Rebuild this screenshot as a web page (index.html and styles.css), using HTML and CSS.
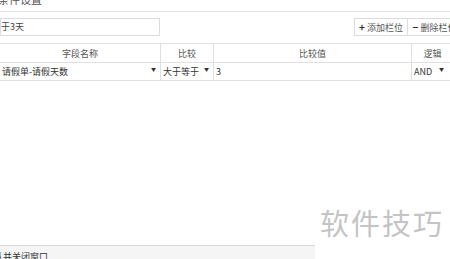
FILE: index.html
```html
<!DOCTYPE html>
<html>
<head>
<meta charset="utf-8">
<link rel="stylesheet" href="styles.css">
</head>
<body>
<div class="page">
  <div class="title"><span>条件设置</span></div>

  <div class="toolbar">
    <div class="search">于3天</div>
    <div class="btns">
      <span class="btn"><b>+</b> 添加栏位</span>
      <span class="btn"><b>−</b> 删除栏位</span>
    </div>
  </div>

  <table class="grid">
    <tr>
      <th class="c1">字段名称</th>
      <th class="c2">比较</th>
      <th class="c3">比较值</th>
      <th class="c4">逻辑</th>
    </tr>
    <tr>
      <td><span class="sel">请假单-请假天数<i>▼</i></span></td>
      <td><span class="sel">大于等于<i>▼</i></span></td>
      <td>3</td>
      <td><span class="sel">AND<i>▼</i></span></td>
    </tr>
  </table>

  <div class="footer">
    <div class="footbar">认并关闭窗口</div>
  </div>

  <div class="mark">软件技巧</div>
</div>
</body>
</html>
```

FILE: styles.css
```css
body {
  margin: 0;
  overflow: hidden;
  background: #ffffff;
  color: #333333;
  font-family: "Noto Sans CJK SC", "Liberation Sans", sans-serif;
  font-size: 9px;
}

.page {
  position: relative;
  width: 450px;
  height: 259px;
  display: flex;
  flex-direction: column;
  overflow: hidden;
}

.title {
  height: 11px;
  border-bottom: 1px solid #e2e2e2;
  overflow: hidden;
}
.title span {
  display: block;
  margin-top: -8px;
  margin-left: -2px;
  font-size: 11px;
  line-height: 14px;
  color: #555555;
}

.toolbar {
  display: flex;
  justify-content: space-between;
  margin-top: 6px;
  height: 18px;
}
.search {
  width: 160px;
  box-sizing: border-box;
  border: 1px solid #dcdcdc;
  line-height: 16px;
  color: #444444;
}
.btns {
  display: flex;
  margin-right: -12px;
}
.btn {
  box-sizing: border-box;
  width: 54px;
  height: 18px;
  line-height: 16px;
  text-align: center;
  border: 1px solid #dcdcdc;
  color: #555555;
  font-size: 9px;
  background: #ffffff;
}
.btn + .btn {
  border-left: none;
}
.btn b {
  color: #333333;
  font-size: 10px;
}

.grid {
  margin-top: 7px;
  margin-left: -1px;
  width: 455px;
  flex-shrink: 0;
  border-collapse: collapse;
  table-layout: fixed;
}
.grid th, .grid td {
  border: 1px solid #e0e0e0;
  padding: 0 2px;
  white-space: nowrap;
  overflow: hidden;
}
.grid th {
  height: 18px;
  font-weight: normal;
  color: #555555;
  text-align: center;
}
.grid td {
  height: 17px;
  text-align: left;
  color: #333333;
}
.c1 { width: 156px; }
.c2 { width: 48px; }
.c3 { width: 193px; }
.sel {
  display: flex;
  justify-content: space-between;
  padding-right: 2px;
}
.sel i {
  font-style: normal;
  font-size: 5px;
  color: #333333;
}
.grid td:last-child .sel {
  width: 30px;
}

.footer {
  margin-top: auto;
  height: 14px;
}
.footbar {
  width: 315px;
  height: 14px;
  box-sizing: border-box;
  border-top: 1px solid #d8d8d8;
  background: #f5f5f5;
  padding-top: 5px;
  text-indent: -6px;
  line-height: 12px;
  color: #333333;
}

.mark {
  position: absolute;
  left: 320px;
  top: 202px;
  font-size: 29px;
  letter-spacing: 2px;
  color: #c4c4c4;
  line-height: 40px;
}
```
